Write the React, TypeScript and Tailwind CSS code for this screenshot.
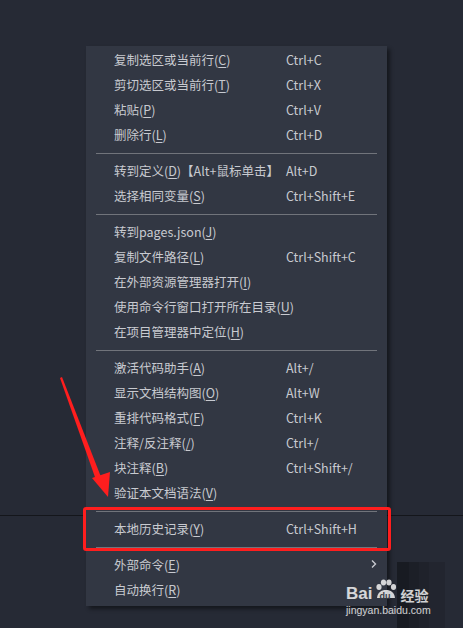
import React from "react";

type Item = { label: string; key: string; suffix?: string; shortcut?: string; sub?: boolean };
type Entry = Item | "sep";

const entries: Entry[] = [
  { label: "复制选区或当前行", key: "C", shortcut: "Ctrl+C" },
  { label: "剪切选区或当前行", key: "T", shortcut: "Ctrl+X" },
  { label: "粘贴", key: "P", shortcut: "Ctrl+V" },
  { label: "删除行", key: "L", shortcut: "Ctrl+D" },
  "sep",
  { label: "转到定义", key: "D", suffix: "【Alt+鼠标单击】", shortcut: "Alt+D" },
  { label: "选择相同变量", key: "S", shortcut: "Ctrl+Shift+E" },
  "sep",
  { label: "转到pages.json", key: "J" },
  { label: "复制文件路径", key: "L", shortcut: "Ctrl+Shift+C" },
  { label: "在外部资源管理器打开", key: "I" },
  { label: "使用命令行窗口打开所在目录", key: "U" },
  { label: "在项目管理器中定位", key: "H" },
  "sep",
  { label: "激活代码助手", key: "A", shortcut: "Alt+/" },
  { label: "显示文档结构图", key: "O", shortcut: "Alt+W" },
  { label: "重排代码格式", key: "F", shortcut: "Ctrl+K" },
  { label: "注释/反注释", key: "/", shortcut: "Ctrl+/" },
  { label: "块注释", key: "B", shortcut: "Ctrl+Shift+/" },
  { label: "验证本文档语法", key: "V" },
  "sep",
  { label: "本地历史记录", key: "Y", shortcut: "Ctrl+Shift+H" },
  "sep",
  { label: "外部命令", key: "E", sub: true },
  { label: "自动换行", key: "R" },
];

function Row({ it }: { it: Item }) {
  return (
    <div className="flex h-[25px] items-center pl-[28px] pr-[10px] relative">
      <div className="w-[172px] whitespace-nowrap">
        {it.label}(<span className="underline underline-offset-2">{it.key}</span>){it.suffix}
      </div>
      <div className="whitespace-nowrap">{it.shortcut}</div>
      {it.sub && (
        <svg className="absolute left-[284px] top-[6px]" width="8" height="10" viewBox="0 0 8 10">
          <path d="M2 1.5 L5.5 5 L2 8.5" stroke="#c8cad0" strokeWidth="1.4" fill="none" />
        </svg>
      )}
    </div>
  );
}

export default function App() {
  return (
    <div
      className="relative w-[463px] h-[628px] overflow-hidden bg-[#262a35]"
      style={{ fontFamily: '"Noto Sans CJK SC", "Noto Sans", sans-serif' }}
    >
      {/* background line */}
      <div className="absolute left-0 right-0 top-[515px] h-px bg-[#14161b]" />
      {/* dark stripes bottom right */}
      <div className="absolute top-[562px] left-[397px] h-[66px] flex">
        <div className="w-[12px] bg-[#181b22]" />
        <div className="w-[10px] bg-[#1c1f27]" />
        <div className="w-[10px] bg-[#1f222b]" />
        <div className="w-[16px] bg-[#22252f]" />
      </div>

      {/* menu */}
      <div className="absolute left-[86px] top-[46px] w-[301px] bg-[#323743] pt-[2px] pb-[3px] text-[12.5px] text-[#c8cad0] shadow-[3px_3px_4px_rgba(0,0,0,0.45)]">
        {entries.map((e, i) =>
          e === "sep" ? (
            <div key={i} className="h-[11px] flex items-center px-[10px]">
              <div className="h-px w-full bg-[#71747b]" />
            </div>
          ) : (
            <Row key={i} it={e} />
          )
        )}
      </div>

      {/* red highlight box */}
      <div className="absolute left-[83px] top-[507px] w-[308px] h-[44px] border-[3px] border-[#ff1e1e] rounded-[3px]" />

      {/* red arrow */}
      <svg className="absolute left-0 top-0" width="463" height="628" viewBox="0 0 463 628">
        <path d="M60 378 L62 377 L101 477 L96 480 Z" fill="#ff1e1e" />
        <path d="M92 478 L108 497 L110 472 Z" fill="#ff1e1e" />
      </svg>

      {/* watermark */}
      <div className="absolute left-[346px] top-[583px] text-white/80 flex flex-col items-start">
        <div className="flex items-end h-[19px] leading-none">
          <span className="text-[17px] font-bold leading-none" style={{ fontFamily: '"Liberation Sans", sans-serif' }}>Bai</span>
          <span className="relative w-[28px] h-[19px]">
            <svg width="28" height="19" viewBox="0 0 28 19" className="absolute left-0 top-[-4px]">
              <ellipse cx="7" cy="8" rx="2.6" ry="3" fill="currentColor" />
              <ellipse cx="11.5" cy="3.5" rx="2.6" ry="3" fill="currentColor" />
              <ellipse cx="17" cy="3.5" rx="2.6" ry="3" fill="currentColor" />
              <ellipse cx="21.5" cy="8" rx="2.6" ry="3" fill="currentColor" />
              <path d="M5 20 C5 14 9 11 14 11 C19 11 23 14 23 20 C23 23 5 23 5 20 Z" fill="currentColor" />
            </svg>
            <span className="absolute left-[7px] top-[9px] text-[9px] font-bold leading-none text-[#3a3e48]" style={{ fontFamily: '"Liberation Sans", sans-serif' }}>du</span>
          </span>
          <span className="text-[14px] font-bold leading-none">经验</span>
        </div>
        <div className="text-[10.5px] mt-[3px] leading-none" style={{ fontFamily: '"Liberation Sans", sans-serif' }}>
          jingyan.baidu.com
        </div>
      </div>
    </div>
  );
}
